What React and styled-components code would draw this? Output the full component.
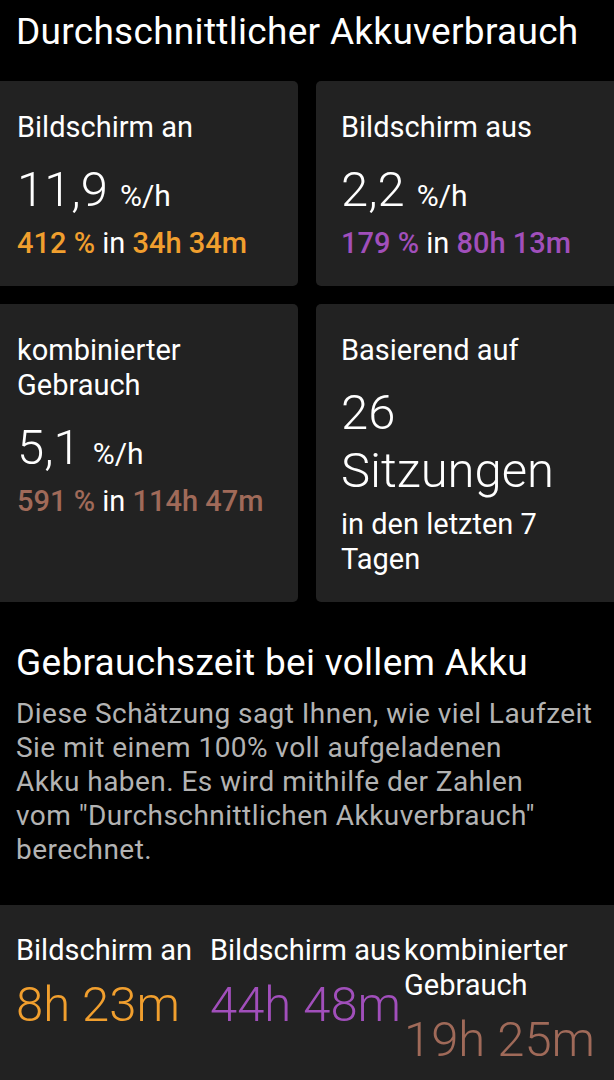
import React from "react";
import styled, { createGlobalStyle } from "styled-components";

const GlobalStyle = createGlobalStyle`
  html, body {
    margin: 0;
    padding: 0;
    background: #000;
  }
  body {
    font-family: Roboto, "Noto Sans", sans-serif;
    color: #fff;
    -webkit-font-smoothing: antialiased;
  }
`;

const colors = {
  on: "#f19f2e",
  off: "#a14fbb",
  mixed: "#a06a59",
};

const Page = styled.div`
  width: 614px;
  height: 1080px;
  overflow: hidden;
  background: #000;
`;

const Heading = styled.h1`
  margin: 0;
  padding: ${(p) => p.$top || 0}px 16px 0;
  font-size: 37px;
  font-weight: 400;
  line-height: 44px;
  letter-spacing: 0.3px;
  white-space: nowrap;
`;

const Grid = styled.div`
  display: grid;
  grid-template-columns: 1fr 1fr;
  gap: 18px;
  margin: 27px -8px 0;
`;

const Card = styled.div`
  background: #222;
  border-radius: 5px;
  padding: 29px 25px 25px;
`;

const Label = styled.div`
  font-size: 29px;
  line-height: 35px;
  color: #fff;
`;

const Value = styled.div`
  margin-top: 16px;
  font-size: 49px;
  line-height: 58px;
  font-weight: 300;
  color: ${(p) => p.$color || "#fff"};
  white-space: nowrap;
`;

const Unit = styled.span`
  margin-left: 12px;
  font-size: 30px;
  line-height: 1;
  font-weight: 400;
`;

const Sub = styled.div`
  margin-top: 7px;
  font-size: 29px;
  line-height: 35px;
  white-space: nowrap;
`;

const Accent = styled.span`
  color: ${(p) => p.$color};
  font-weight: 500;
`;

const Text = styled.p`
  margin: 12px 16px 0;
  font-size: 28px;
  line-height: 34px;
  letter-spacing: 0.45px;
  color: #b3b3b3;
  white-space: nowrap;
`;

const Panel = styled.div`
  margin-top: 38px;
  background: #222;
  padding: 28px 16px 0;
  height: 175px;
  box-sizing: border-box;
  display: grid;
  grid-template-columns: repeat(3, 1fr);
`;

const Column = styled.div`
  min-width: 0;
`;

const ColLabel = styled(Label)`
  white-space: nowrap;
`;

const ColValue = styled(Value)`
  margin-top: 8px;
`;

const RateCard = ({ label, rate, percent, time, color }) => (
  <Card>
    <Label>{label}</Label>
    <Value>
      {rate}
      <Unit>%/h</Unit>
    </Value>
    <Sub>
      <Accent $color={color}>{percent} %</Accent> in{" "}
      <Accent $color={color}>{time}</Accent>
    </Sub>
  </Card>
);

const estimates = [
  { label: ["Bildschirm an"], value: "8h 23m", color: colors.on },
  { label: ["Bildschirm aus"], value: "44h 48m", color: colors.off },
  { label: ["kombinierter", "Gebrauch"], value: "19h 25m", color: colors.mixed },
];

export default function App() {
  return (
    <Page>
      <GlobalStyle />
      <Heading $top={10}>Durchschnittlicher Akkuverbrauch</Heading>
      <Grid>
        <RateCard
          label="Bildschirm an"
          rate="11,9"
          percent="412"
          time="34h 34m"
          color={colors.on}
        />
        <RateCard
          label="Bildschirm aus"
          rate="2,2"
          percent="179"
          time="80h 13m"
          color={colors.off}
        />
        <RateCard
          label={
            <>
              kombinierter
              <br />
              Gebrauch
            </>
          }
          rate="5,1"
          percent="591"
          time="114h 47m"
          color={colors.mixed}
        />
        <Card>
          <Label>Basierend auf</Label>
          <Value>
            26
            <br />
            Sitzungen
          </Value>
          <Sub>
            in den letzten 7
            <br />
            Tagen
          </Sub>
        </Card>
      </Grid>

      <Heading $top={39}>Gebrauchszeit bei vollem Akku</Heading>
      <Text>
        Diese Schätzung sagt Ihnen, wie viel Laufzeit
        <br />
        Sie mit einem 100% voll aufgeladenen
        <br />
        Akku haben. Es wird mithilfe der Zahlen
        <br />
        vom "Durchschnittlichen Akkuverbrauch"
        <br />
        berechnet.
      </Text>

      <Panel>
        {estimates.map((e) => (
          <Column key={e.value}>
            <ColLabel>
              {e.label.map((l, i) => (
                <div key={i}>{l}</div>
              ))}
            </ColLabel>
            <ColValue $color={e.color}>{e.value}</ColValue>
          </Column>
        ))}
      </Panel>
    </Page>
  );
}
